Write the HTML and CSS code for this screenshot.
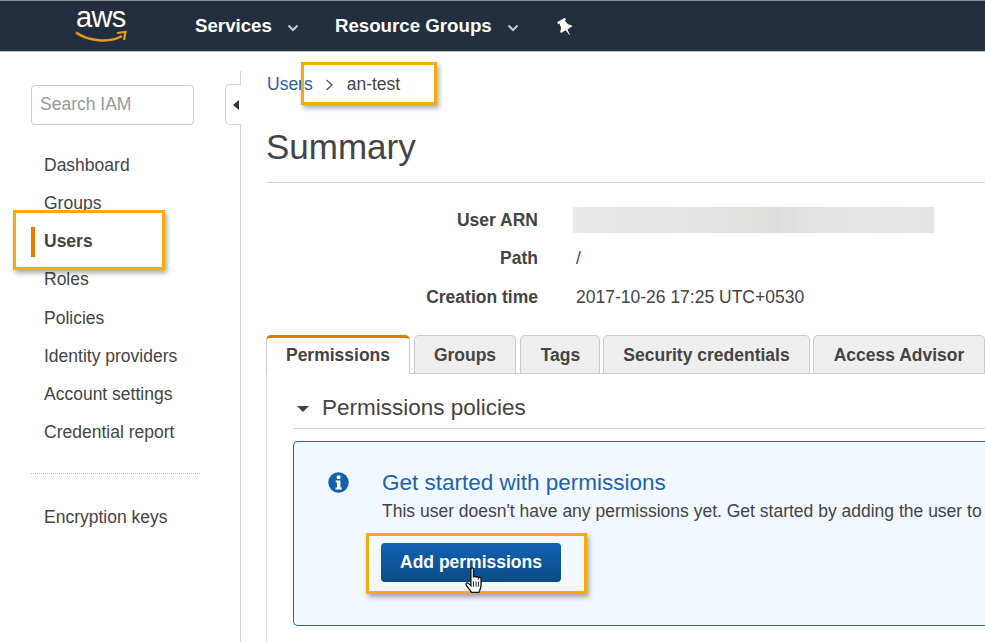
FILE: index.html
```html
<!DOCTYPE html>
<html lang="en">
<head>
<meta charset="utf-8">
<title>IAM user an-test</title>
<link rel="stylesheet" href="styles.css">
</head>
<body>
<header class="topbar">
  <div class="logo">
    <span class="logo-text">aws</span>
    <svg class="logo-smile" width="52" height="14" viewBox="0 0 52 14"><path d="M1 2.500C13 11 34 13.500 47 6" fill="none" stroke="#ec9a1e" stroke-width="2.400"/><path d="M42 3 50.500 2 49 10" fill="none" stroke="#ec9a1e" stroke-width="2.200"/></svg>
  </div>
  <nav class="topnav">
    <span class="topnav-item services">Services<svg class="chev" width="12" height="8" viewBox="0 0 12 8"><path d="M1.500 1.500 6 6l4.500-4.500" fill="none" stroke="#c9ccd1" stroke-width="2"/></svg></span>
    <span class="topnav-item groups">Resource Groups<svg class="chev" width="12" height="8" viewBox="0 0 12 8"><path d="M1.500 1.500 6 6l4.500-4.500" fill="none" stroke="#c9ccd1" stroke-width="2"/></svg></span>
    <svg class="pin" width="18" height="20" viewBox="-1 -1 18 20"><g transform="rotate(-30 8 9)"><path d="M3.500 1h9v2.200H11l1 5 2.500 2.500v1.500H9l-.7 6h-.6L7 12.200H1.500v-1.500L4 8.200l1-5H3.500z" fill="#fff"/></g></svg>
  </nav>
</header>
<div class="layout">
  <aside class="sidebar">
    <div class="search">Search IAM</div>
    <ul class="menu">
      <li>Dashboard</li>
      <li>Groups</li>
      <li class="active">Users</li>
      <li>Roles</li>
      <li>Policies</li>
      <li>Identity providers</li>
      <li>Account settings</li>
      <li>Credential report</li>
    </ul>
    <div class="menu-sep"></div>
    <ul class="menu">
      <li>Encryption keys</li>
    </ul>
    <div class="collapse"><span class="collapse-arrow"></span></div>
  </aside>
  <main class="main">
    <div class="crumbs"><span class="crumb-link">Users</span><svg class="crumb-sep" width="9" height="12" viewBox="0 0 9 12"><path d="M1.500 1 7 6 1.500 11" fill="none" stroke="#555" stroke-width="1.300"/></svg><span>an-test</span></div>
    <h1 class="title">Summary</h1>
    <dl class="facts">
      <div class="fact"><dt>User ARN</dt><dd><div class="blur"></div></dd></div>
      <div class="fact"><dt>Path</dt><dd>/</dd></div>
      <div class="fact"><dt>Creation time</dt><dd>2017-10-26 17:25 UTC+0530</dd></div>
    </dl>
    <div class="tabs">
      <div class="tab tab-on">Permissions</div>
      <div class="tab tab-groups">Groups</div>
      <div class="tab tab-tags">Tags</div>
      <div class="tab tab-sec">Security credentials</div>
      <div class="tab tab-adv">Access Advisor</div>
    </div>
    <section class="panel">
      <div class="section-head"><span class="caret"></span>Permissions policies</div>
      <div class="notice">
        <svg class="info" width="21" height="21" viewBox="0 0 21 21"><circle cx="10.500" cy="10.500" r="10.200" fill="#125fb0"/><rect x="8.800" y="3.600" width="3.600" height="3.300" rx=".6" fill="#fff"/><path d="M7.700 8.500h4.700v7h1.400v2H7.500v-2h1.500v-5H7.700z" fill="#fff"/></svg>
        <div class="notice-body">
          <div class="notice-title">Get started with permissions</div>
          <div class="notice-text">This user doesn't have any permissions yet. Get started by adding the user to</div>
          <button class="primary">Add permissions</button>
        </div>
      </div>
    </section>
  </main>
</div>
<div class="mark mark-crumb"></div>
<div class="mark mark-users"></div>
<div class="mark mark-add"></div>
<svg class="hand" width="20" height="27" viewBox="0 0 18 26"><path d="M6 2c0-1.500 2.500-1.500 2.500 0v8c.5-1.500 2.500-1.200 2.500.2.500-1.200 2.400-1 2.400.4.600-1 2.400-.8 2.400.8v6c0 3-1.500 5.500-2 7H6.500C5.500 22.500 3 20 1.500 17.500.5 15.500 2.500 14.500 4 16l2 2z" fill="#fff" stroke="#111" stroke-width="1.300"/><path d="M8.500 14v5M11 14v5M13.400 14v5" stroke="#111" stroke-width=".9" fill="none"/></svg>
</body>
</html>
```
FILE: styles.css
```css
* { box-sizing: border-box; }
html, body { margin: 0; padding: 0; }
body {
  width: 985px;
  height: 642px;
  overflow: hidden;
  position: relative;
  background: #fff;
  font-family: "Liberation Sans", Arial, sans-serif;
  font-size: 17.500px;
  color: #444;
}
.topbar {
  height: 52px;
  background: #232f3e;
  border-top: 1px solid #8b8f94;
  border-bottom: 1px solid #b9bcc0;
  display: flex;
  align-items: center;
  padding-left: 74px;
}
.logo { width: 121px; height: 42px; position: relative; flex: none; }
.logo-text { position: absolute; left: 2px; top: -4px; color: #fff; font-size: 29px; line-height: 33px; letter-spacing: -.6px; }
.logo-smile { position: absolute; left: 1px; top: 25px; }
.topnav { display: flex; align-items: center; font-weight: 700; font-size: 18.700px; color: #fff; }
.topnav-item { display: flex; align-items: center; }
.chev { margin-left: 15px; margin-top: 3px; }
.services { margin-right: 36px; }
.groups { margin-right: 37px; }
.pin { margin-top: 1px; }
.layout { display: flex; height: 590px; }
.sidebar {
  width: 241px;
  flex: none;
  position: relative;
  margin-top: 19px;
  padding: 14px 41px 0 31px;
  border-right: 1px solid #d5d5d5;
}
.search {
  width: 163px;
  height: 40px;
  border: 1px solid #ccc;
  border-radius: 4px;
  color: #999;
  padding: 0 8px;
  line-height: 37px;
}
.menu { list-style: none; margin: 0; padding: 0; }
.search + .menu { margin-top: 21px; }
.menu li { height: 38.150px; line-height: 38px; padding-left: 13px; position: relative; }
.menu .active { font-weight: 700; }
.menu .active::before {
  content: "";
  position: absolute;
  left: 0;
  top: 5px;
  width: 4px;
  height: 30px;
  background: #e07b00;
}
.menu-sep { width: 169px; border-top: 1px dotted #bbb; margin: 22px 0 24px; }
.collapse {
  position: absolute;
  right: -1px;
  top: 13px;
  width: 16px;
  height: 41px;
  background: #fff;
  border: 1px solid #d5d5d5;
  border-right: 0;
  border-radius: 5px 0 0 5px;
  display: flex;
  align-items: center;
  padding-left: 7px;
}
.collapse-arrow { width: 0; height: 0; border: 5px solid transparent; border-left: 0; border-right: 6px solid #333; }
.main { flex: 1; min-width: 0; padding: 19px 0 0 26px; }
.crumbs { display: flex; align-items: center; height: 27px; color: #444; }
.crumb-link { color: #2a5ea8; }
.crumb-sep { margin: 0 13px 0 12px; }
.title { font-size: 35px; font-weight: 400; color: #444; margin: 27px 0 0; line-height: 44px; height: 58px; border-bottom: 1px solid #d5d5d5; text-indent: -1px; }
.facts { margin: 0; padding-top: 18px; height: 153px; }
.fact { display: flex; height: 38.600px; align-items: center; }
.fact dt { width: 271px; text-align: right; font-weight: 700; }
.fact dd { margin: 0 0 0 38px; flex: none; }
.fact:first-child dd { margin-left: 35px; }
.blur { width: 361px; height: 26px; background: linear-gradient(90deg, #e9e9e9, #e5e5e5 30%, #e1e1e0 50%, #dcdcdc 56%, #e3e3e3 65%, #e6e6e6 90%, #e3e3e3); }
.tabs { display: flex; height: 38px; align-items: flex-end; border-bottom: 1px solid #ccc; position: relative; font-weight: 700; }
.tab {
  height: 38px;
  background: #eee;
  border: 1px solid #ccc;
  border-bottom: 0;
  border-radius: 5px 5px 0 0;
  text-align: center;
  line-height: 38px;
  flex: none;
}
.tab-on { width: 144px; margin-left: -1px; background: #fff; border-top: 3px solid #e07b00; line-height: 34px; margin-bottom: -1px; height: 39px; }
.tab-groups { width: 102px; margin-left: 4px; }
.tab-tags { width: 80px; margin-left: 4px; text-indent: 1px; }
.tab-sec { width: 207px; margin-left: 3px; }
.tab-adv { width: 172px; margin-left: 3px; }
.panel { border-left: 1px solid #ddd; margin-left: -1px; padding: 0 0 0 26px; height: 269px; }
.section-head { height: 55px; display: flex; align-items: center; font-size: 22.500px; color: #444; border-bottom: 1px solid #d5d5d5; padding: 14px 0 0 4px; }
.caret { width: 0; height: 0; border: 6px solid transparent; border-top: 6px solid #444; border-bottom: 0; margin: 2px 13px 0 0; }
.notice {
  margin-top: 12px;
  height: 185px;
  background: #f1f8ff;
  border: 1px solid #1f65ad;
  border-right: 0;
  border-radius: 5px 0 0 5px;
  display: flex;
  padding: 30px 0 0 34px;
}
.info { flex: none; }
.notice-body { margin-left: 33px; white-space: nowrap; }
.notice-title { font-size: 22.500px; color: #1e63ae; line-height: 24px; margin-top: -1px; }
.notice-text { line-height: 22px; margin-top: 5px; }
.primary {
  display: block;
  width: 180px;
  height: 39px;
  margin-top: 21px;
  margin-left: -1px;
  background: linear-gradient(#1262b3, #0c4a86);
  border: 0;
  border-radius: 4px;
  color: #fff;
  font: 700 17.500px "Liberation Sans", Arial, sans-serif;
}
.mark { position: absolute; border: 3px solid #f8ab05; box-shadow: 2px 3px 5px rgba(0,0,0,.35); }
.mark-crumb { left: 301px; top: 62px; width: 136px; height: 43px; }
.mark-users { left: 13px; top: 210px; width: 152px; height: 60px; }
.mark-add { left: 366px; top: 533px; width: 221px; height: 61px; }
.hand { position: absolute; left: 464px; top: 567px; }
```
